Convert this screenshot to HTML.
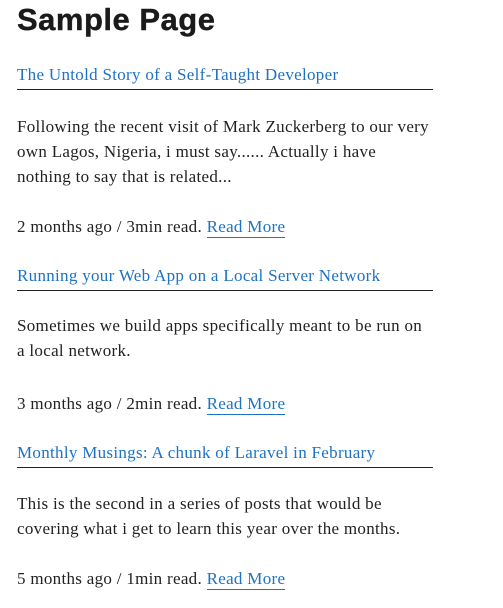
<!DOCTYPE html>
<html><head><meta charset="utf-8"><style>
body{margin:0;background:#fff;width:503px;height:608px;overflow:hidden;font-family:"Liberation Serif",serif;color:#222;}
h1{position:absolute;left:17px;top:0;margin:0;font-family:"Liberation Sans",sans-serif;font-weight:bold;font-size:31px;line-height:40px;color:#1a1a1a;letter-spacing:0.5px;-webkit-text-stroke:0.4px #1a1a1a}
.t{position:absolute;left:17px;width:416px;border-bottom:1px solid #222;color:#1d72c4;font-size:17px;line-height:22px;height:25px;letter-spacing:0.3px}
.p{position:absolute;left:17px;width:440px;font-size:17px;line-height:25px;letter-spacing:0.3px;white-space:nowrap}
.m a{color:#1d72c4;text-decoration:none;border-bottom:1px solid #1d72c4;padding-bottom:1px}
</style></head><body>
<h1>Sample Page</h1>
<div class="t" style="top:64px">The Untold Story of a Self-Taught Developer</div>
<div class="p" style="top:114px">Following the recent visit of Mark Zuckerberg to our very<br>own Lagos, Nigeria, i must say...... Actually i have<br>nothing to say that is related...</div>
<div class="p m" style="top:214px">2 months ago / 3min read. <a>Read More</a></div>
<div class="t" style="top:265px">Running your Web App on a Local Server Network</div>
<div class="p" style="top:313px">Sometimes we build apps specifically meant to be run on<br>a local network.</div>
<div class="p m" style="top:391px">3 months ago / 2min read. <a>Read More</a></div>
<div class="t" style="top:442px">Monthly Musings: A chunk of Laravel in February</div>
<div class="p" style="top:491px">This is the second in a series of posts that would be<br>covering what i get to learn this year over the months.</div>
<div class="p m" style="top:566px">5 months ago / 1min read. <a>Read More</a></div>
</body></html>
